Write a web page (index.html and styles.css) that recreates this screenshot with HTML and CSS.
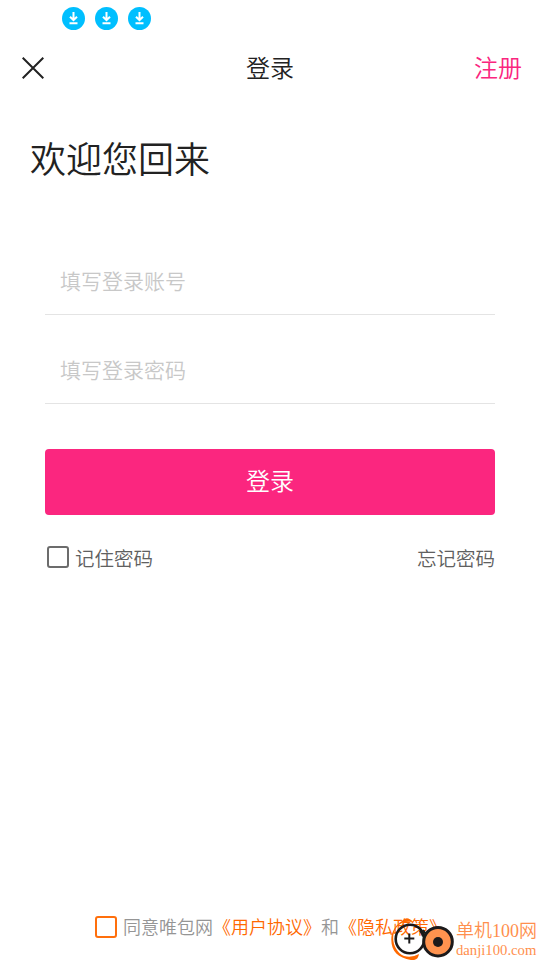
FILE: index.html
```html
<!DOCTYPE html>
<html lang="zh-CN">
<head>
<meta charset="utf-8">
<title>登录</title>
<link rel="stylesheet" href="styles.css">
</head>
<body>
<div class="screen">
  <div class="status">
    <svg class="dl" viewBox="0 0 23 23"><circle cx="11.5" cy="11.5" r="11.5"/><path d="M11.5 5v8M8 9.7l3.500 3.500 3.500-3.500M7.500 16.300h8"/></svg>
    <svg class="dl" viewBox="0 0 23 23"><circle cx="11.5" cy="11.5" r="11.5"/><path d="M11.5 5v8M8 9.7l3.500 3.500 3.500-3.500M7.500 16.300h8"/></svg>
    <svg class="dl" viewBox="0 0 23 23"><circle cx="11.5" cy="11.5" r="11.5"/><path d="M11.5 5v8M8 9.7l3.500 3.500 3.500-3.500M7.500 16.300h8"/></svg>
  </div>
  <header class="nav">
    <svg class="close" viewBox="0 0 22 22"><path d="M.7.7l20.6 20.6M21.3.7L.7 21.3"/></svg>
    <div class="nav-title">登录</div>
    <div class="register">注册</div>
  </header>
  <h1 class="welcome">欢迎您回来</h1>
  <main class="form">
    <div class="field">填写登录账号</div>
    <div class="field">填写登录密码</div>
    <div class="submit">登录</div>
    <div class="options">
      <div class="remember"><span class="box"></span>记住密码</div>
      <div>忘记密码</div>
    </div>
  </main>
  <footer class="agree">
    <span class="box"></span>
    <div>同意唯包网<b>《用户协议》</b>和<b>《隐私政策》</b></div>
  </footer>
  <div class="mark">
    <svg class="mark-logo" viewBox="0 0 65 44">
      <path class="swoosh" d="M12 7C-1 13 1 34 14 40q8 2 15-2-1 7-8 6C7 42 0 34 1.500 20 3 13 7 8 12 5Q17-1 23 6Q17 5 12 7Z"/>
      <circle class="eye-left" cx="20" cy="23" r="14.300"/>
      <path class="cross" d="M30 14.500q2 3 3 6M36 18l-3-4"/>
      <circle class="eye-right" cx="48" cy="25.700" r="14.300"/>
      <circle class="pupil" cx="48" cy="26" r="5"/>
      <path class="cross" d="M19.300 17.500v10M14.300 22.500h10"/>
    </svg>
    <div class="mark-text">
      <div class="mark-name">单机100网</div>
      <div class="mark-url">danji100.com</div>
    </div>
  </div>
</div>
</body>
</html>
```
FILE: styles.css
```css
* { box-sizing: border-box; }
body { margin: 0; background: #fff; color: #222; font-family: "Noto Sans CJK SC", sans-serif; font-weight: 350; }
.screen { position: relative; display: flex; flex-direction: column; width: 540px; height: 960px; overflow: hidden; }
.status { display: flex; gap: 10px; height: 36px; padding: 7px 0 0 62px; }
.dl { width: 23px; height: 23px; fill: #00bfff; }
.dl path { fill: none; stroke: #fff; stroke-width: 2; }
.nav { display: grid; grid-template-columns: 1fr auto 1fr; align-items: center; height: 64px; padding: 0 18px 0 22px; font-size: 24px; line-height: 36px; }
.close { width: 22px; height: 22px; fill: none; stroke: #222; stroke-width: 2; }
.nav-title { margin: -2px 0 0 -4px; }
.register { margin-top: -2px; color: #fa267e; text-align: right; }
.welcome { margin: 30px 0 0 30px; font-size: 36px; line-height: 54px; font-weight: 350; }
.form { padding: 64px 45px 0; }
.field { height: 67px; padding-left: 15px; border-bottom: 1px solid #e4e4e4; color: #c8c8c8; font-size: 21px; line-height: 64px; }
.field + .field { margin-top: 22px; }
.submit { height: 66px; margin-top: 45px; border-radius: 4px; background: #fb267f; color: #fff; font-size: 24px; line-height: 62px; text-align: center; }
.options { display: flex; justify-content: space-between; margin-top: 27px; color: #606060; font-size: 19.5px; line-height: 32px; }
.remember { display: flex; gap: 6px; padding-left: 2px; }
.box { width: 22px; height: 22px; margin-top: 4px; border: 2px solid #6c6c6c; border-radius: 3px; }
.agree { display: flex; gap: 6px; margin: auto 0 18px 95px; color: #959595; font-size: 18px; line-height: 28px; }
.agree b { color: #ff6900; font-weight: 350; }
.agree .box { margin: 4px 0; border-color: #ff6f0c; }
.mark { position: absolute; left: 390px; top: 916px; display: flex; color: #ff8f4d; }
.mark-logo { width: 65px; height: 44px; }
.swoosh { fill: #ff6900; }
.eye-left { fill: none; stroke: #1c1a1b; stroke-width: 2.6; }
.eye-right { fill: #ff934f; stroke: #1c1a1b; stroke-width: 3; }
.pupil { fill: #1c1a1b; }
.cross { fill: none; stroke: #1c1a1b; stroke-width: 2; }
.mark-text { padding: 4px 0 0 1px; white-space: nowrap; }
.mark-name { font-family: "Liberation Serif", "Noto Sans CJK SC", serif; font-size: 18px; line-height: 22px; }
.mark-url { font-family: "Liberation Serif", serif; font-size: 14.7px; line-height: 16px; }
```
